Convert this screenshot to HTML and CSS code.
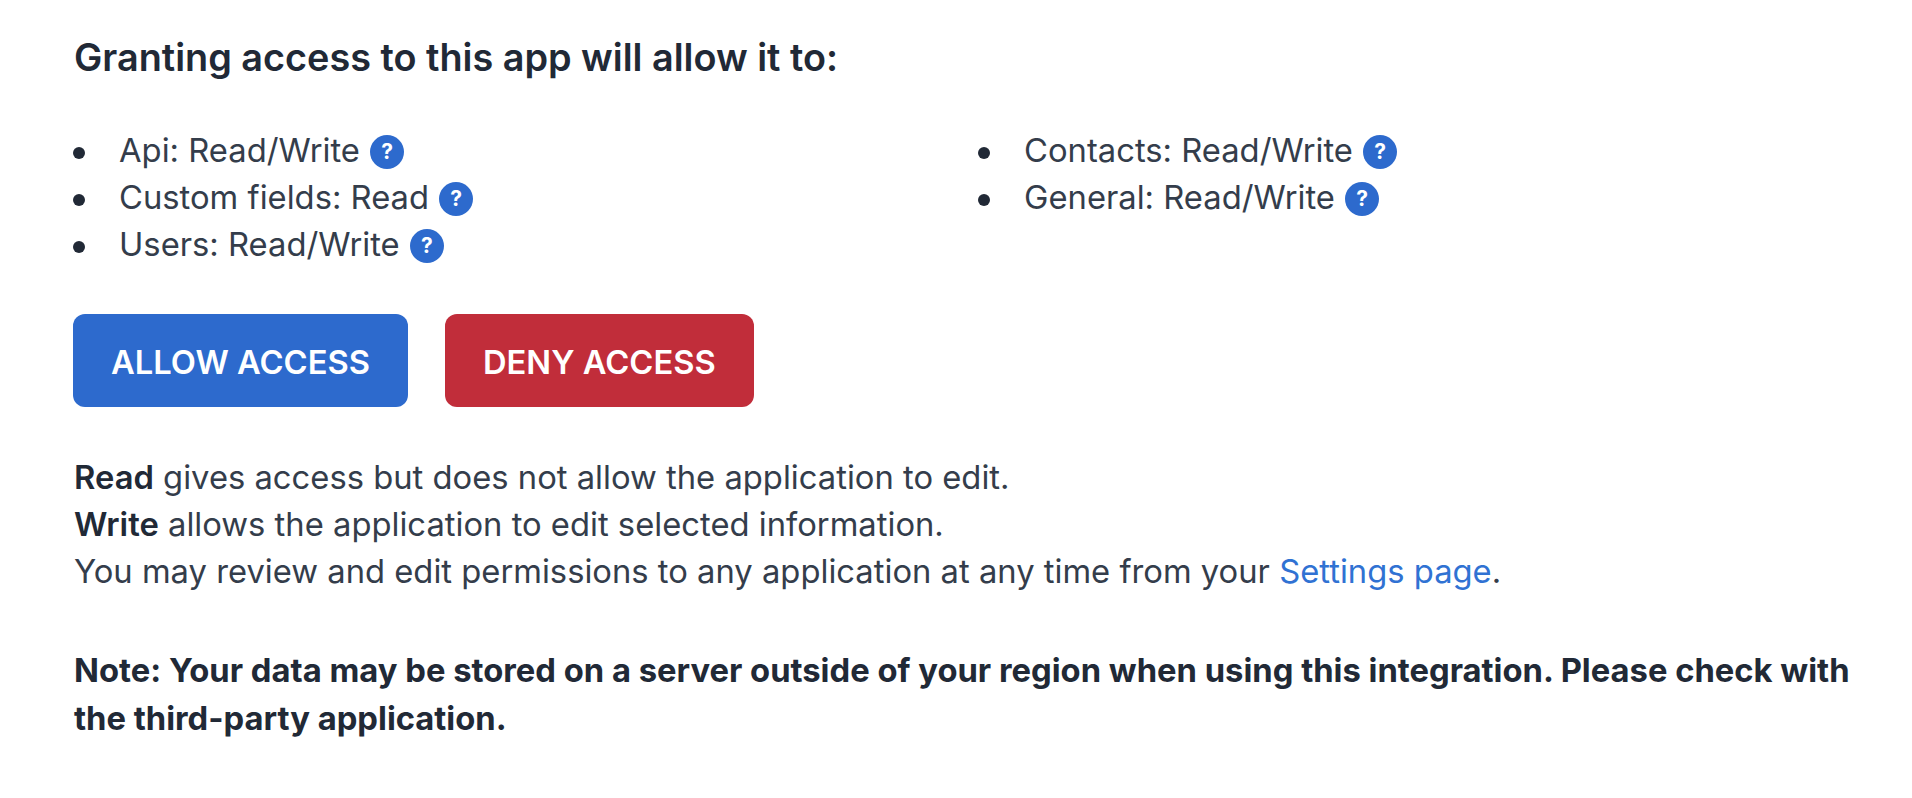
FILE: index.html
```html
<!DOCTYPE html>
<html lang="en">
<head>
  <meta charset="UTF-8" />
  <title>Grant access</title>
  <link rel="stylesheet" href="styles.css">
</head>
<body>
  <div class="grant">
    <h2>Granting access to this app will allow it to:</h2>

    <ul class="scopes">
      <li>Api: Read/Write <span class="help">?</span></li>
      <li>Custom fields: Read <span class="help">?</span></li>
      <li>Users: Read/Write <span class="help">?</span></li>
      <li>Contacts: Read/Write <span class="help">?</span></li>
      <li>General: Read/Write <span class="help">?</span></li>
    </ul>

    <div class="actions">
      <button type="button" class="btn btn-allow">ALLOW ACCESS</button>
      <button type="button" class="btn btn-deny">DENY ACCESS</button>
    </div>

    <p class="info">
      <strong>Read</strong> gives access but does not allow the application to edit.<br>
      <strong>Write</strong> allows the application to edit selected information.<br>
      You may review and edit permissions to any application at any time from your <a href="#">Settings page</a>.
    </p>

    <p class="note">Note: Your data may be stored on a server outside of your region when using this integration. Please check with the third-party application.</p>
  </div>
</body>
</html>
```

FILE: styles.css
```css
* {
  box-sizing: border-box;
  margin: 0;
  padding: 0;
  font-family: 'Inter', sans-serif;
}

body {
  background: #fff;
  color: #343d4b;
  font-size: 32.75px;
  line-height: 47px;
}

.grant {
  width: 1912px;
  padding: 34px 40px 0 74px;
}

h2 {
  color: #212936;
  font-size: 37.8px;
  font-weight: 600;
  line-height: 47px;
  margin-bottom: 46px;
}

.scopes {
  display: grid;
  grid-template-rows: repeat(3, 47px);
  grid-auto-flow: column;
  grid-template-columns: 905px 1fr;
  list-style: none;
  margin-bottom: 46px;
}

.scopes li::before {
  content: '';
  display: inline-block;
  width: 12px;
  height: 12px;
  margin: 0 34px 0 -1px;
  border-radius: 50%;
  background: #212936;
  vertical-align: 3px;
}

.help {
  display: inline-block;
  width: 34px;
  height: 34px;
  margin-left: 1px;
  border-radius: 50%;
  background: #2d6acd;
  color: #fff;
  font-size: 21px;
  font-weight: 700;
  line-height: 34px;
  text-align: center;
  vertical-align: 3px;
}

.actions {
  display: flex;
  gap: 37px;
  margin: 0 0 47px -1px;
}

.btn {
  height: 93px;
  padding: 2px 38px 0;
  font-size: 32.7px;
  font-weight: 600;
  color: #fff;
  border: none;
  border-radius: 12px;
}

.btn-allow {
  background: #2d6acd;
}

.btn-deny {
  background: #c12d3a;
}

.info {
  margin-bottom: 51px;
}

.info strong {
  color: #212936;
  font-weight: 600;
}

.info a {
  color: #3072d3;
  text-decoration: none;
}

.note {
  color: #212936;
  font-weight: 700;
  line-height: 48px;
}
```
